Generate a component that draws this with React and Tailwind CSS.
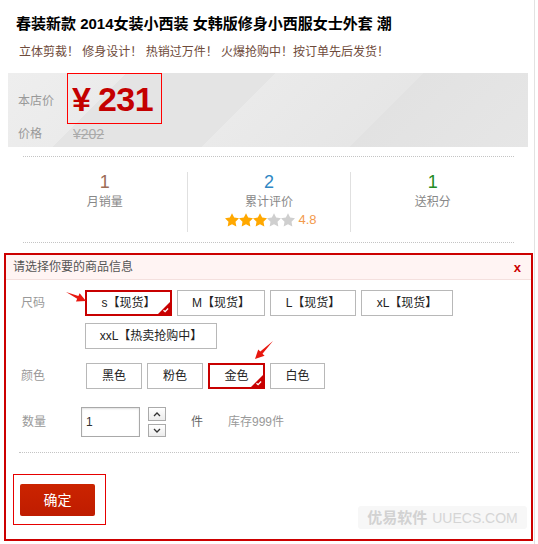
import React from "react";

const Star = ({ color }) => (
  <svg width="14" height="14" viewBox="0 0 20 19" className="block">
    <path d="M10 0l3.1 6.1 6.9 1-5 4.8 1.2 6.8L10 15.5 3.8 18.7 5 11.9 0 7.1l6.9-1z" fill={color} />
  </svg>
);

const Check = () => (
  <svg width="12" height="12" viewBox="0 0 12 12" className="absolute right-0 bottom-0 block">
    <path d="M12 0V12H0Z" fill="#c80000" />
    <path d="M5.5 8.2l1.6 1.5 3-3.2" stroke="#fff" strokeWidth="1.3" fill="none" />
  </svg>
);

const Opt = ({ w, selected, children }) => (
  <div
    className={
      "relative h-[26px] flex items-center justify-center text-[12px] text-[#222] bg-white " +
      (selected ? "border-2 border-[#c80000]" : "border border-[#b8b8b8]")
    }
    style={{ width: w }}
  >
    {children}
    {selected && <Check />}
  </div>
);

export default function App() {
  return (
    <div className="relative w-[538px] h-[544px] bg-white overflow-hidden font-['Liberation_Sans','Noto_Sans_CJK_SC',sans-serif]">
      <div className="w-[535px] h-[544px] border-r border-[#e2e2e2]">
        <h1 className="pl-[16px] pt-[14px] text-[15px] leading-[20px] font-bold text-black">
          春装新款 2014女装小西装 女韩版修身小西服女士外套 潮
        </h1>
        <p className="mt-[8px] pl-[19px] text-[12px] leading-[20px] text-[#6e4a3a]">
          立体剪裁！ 修身设计！ 热销过万件！ 火爆抢购中！按订单先后发货！
        </p>

        <div className="mt-[11px] ml-[8px] w-[520px] h-[74px] bg-[#e7e7e7] bg-[linear-gradient(135deg,#eeeeee_0%,#ebebeb_20%,#e4e4e4_20%,#e4e4e4_45%,#eaeaea_45%,#e6e6e6_70%,#e2e2e2_70%,#e6e6e6_100%)]">
          <div className="flex items-start h-[51px]">
            <span className="w-[59px] pl-[10px] pt-[18px] text-[12px] leading-[20px] text-[#999]">本店价</span>
            <div className="h-[51px] w-[95px] shadow-[inset_0_0_0_1px_#ff0000] flex items-center pl-[5px] text-[#c40000] font-bold">
              <span className="text-[34px] leading-none mr-[7px]">¥</span>
              <span className="text-[34px] leading-none tracking-[-0.5px]">231</span>
            </div>
          </div>
          <div className="flex items-center h-[20px]">
            <span className="w-[65px] pl-[10px] text-[12px] text-[#999]">价格</span>
            <span className="text-[14px] text-[#aaa] line-through">¥202</span>
          </div>
        </div>

        <div className="mt-[9px] ml-[23px] w-[491px] border-t border-dotted border-[#c4c4c4]" />
        <div className="ml-[23px] w-[491px] pt-[15px] grid grid-cols-3">
          <div className="h-[60px] flex flex-col items-center">
            <div className="text-[18px] leading-[20px] text-[#9c6d57]">1</div>
            <div className="text-[12px] leading-[20px] text-[#888]">月销量</div>
          </div>
          <div className="h-[60px] flex flex-col items-center border-l border-[#e0e0e0]">
            <div className="text-[18px] leading-[20px] text-[#2f87c4]">2</div>
            <div className="text-[12px] leading-[20px] text-[#888]">累计评价</div>
            <div className="flex items-center h-[14px] mt-[1px] ml-[4px]">
              <Star color="#ffa800" />
              <Star color="#ffa800" />
              <Star color="#ffa800" />
              <Star color="#cfcfcf" />
              <Star color="#cfcfcf" />
              <span className="ml-[3px] text-[13px] leading-[14px] text-[#f39a4c]">4.8</span>
            </div>
          </div>
          <div className="h-[60px] flex flex-col items-center border-l border-[#e0e0e0]">
            <div className="text-[18px] leading-[20px] text-[#238b23]">1</div>
            <div className="text-[12px] leading-[20px] text-[#888]">送积分</div>
          </div>
        </div>
        <div className="mt-[10px] ml-[23px] w-[491px] border-t border-dotted border-[#c4c4c4]" />

        <div className="relative mt-[10px] ml-[4px] w-[529px] h-[288px] border-2 border-[#cc0000]">
          <div className="h-[25px] bg-[#fff4f3] border-b border-[#f4e0de] flex items-center justify-between pl-[7px] pr-[10px]">
            <span className="text-[12px] text-[#555]">请选择你要的商品信息</span>
            <span className="text-[13px] font-bold text-[#cc0000] leading-none">x</span>
          </div>

          <div className="flex items-start pt-[10px]">
            <span className="w-[79px] pl-[15px] text-[12px] leading-[27px] text-[#999]">尺码</span>
            <div className="w-[440px] flex flex-wrap gap-x-[5px] gap-y-[7px]">
              <Opt w={87} selected>s【现货】</Opt>
              <Opt w={88}>M【现货】</Opt>
              <Opt w={86}>L【现货】</Opt>
              <Opt w={92}>xL【现货】</Opt>
              <Opt w={132}>xxL【热卖抢购中】</Opt>
            </div>
          </div>

          <div className="flex items-center mt-[14px]">
            <span className="w-[80px] pl-[15px] text-[12px] text-[#999]">颜色</span>
            <div className="flex gap-x-[5px]">
              <Opt w={56}>黑色</Opt>
              <Opt w={56}>粉色</Opt>
              <Opt w={57} selected>金色</Opt>
              <Opt w={55}>白色</Opt>
            </div>
          </div>

          <div className="flex items-center mt-[18px]">
            <span className="w-[75px] pl-[16px] text-[12px] text-[#999]">数量</span>
            <div className="w-[59px] h-[30px] border border-[#a9a9a9] shadow-[inset_0_1px_2px_rgba(0,0,0,0.12)] flex items-center pl-[4px] text-[12px] text-[#333]">
              1
            </div>
            <div className="ml-[8px] flex flex-col gap-[3px]">
              <div className="w-[18px] h-[14px] border border-[#aaa] bg-[linear-gradient(#ffffff,#ececec)] flex items-center justify-center">
                <svg width="8" height="5" viewBox="0 0 8 5"><path d="M1 4l3-3 3 3" stroke="#333" strokeWidth="1.3" fill="none" /></svg>
              </div>
              <div className="w-[18px] h-[13px] border border-[#aaa] bg-[linear-gradient(#ffffff,#ececec)] flex items-center justify-center">
                <svg width="8" height="5" viewBox="0 0 8 5"><path d="M1 1l3 3 3-3" stroke="#333" strokeWidth="1.3" fill="none" /></svg>
              </div>
            </div>
            <span className="ml-[25px] text-[12px] text-[#666]">件</span>
            <span className="ml-[25px] text-[12px] text-[#999]">库存999件</span>
          </div>

          <div className="mt-[15px] ml-[13px] w-[500px] border-t border-dotted border-[#c4c4c4]" />

          <div className="mt-[21px] ml-[7px] w-[93px] h-[51px] border border-[#e60000] pt-[9px] pl-[6px]">
            <div className="w-[75px] h-[32px] rounded-[2px] bg-[#c41f00] bg-[linear-gradient(#cb2400,#bf1c00)] flex items-center justify-center text-[14px] text-white">
              确定
            </div>
          </div>

          <div className="absolute left-[352px] top-[251px] w-[169px] h-[23px] rounded-[3px] bg-[#f7f7f7] flex items-center justify-center gap-[5px]">
            <span className="text-[15px] font-bold text-[#d2d2d2] leading-none">优易软件</span>
            <span className="text-[14px] text-[#d5d5d5] leading-none">UUECS.COM</span>
          </div>
        </div>
      </div>

      <svg className="absolute left-0 top-0 pointer-events-none" width="538" height="544" viewBox="0 0 538 544">
        <polygon points="66,292 77.2,298.7 75.95,301.4 86,301 79.65,293.2 78.4,295.9" fill="#e8170f" />
        <polygon points="273,341 262.5,353.7 264.6,355.8 255,359 258.2,349.4 260.3,351.5" fill="#e8170f" />
      </svg>
    </div>
  );
}
